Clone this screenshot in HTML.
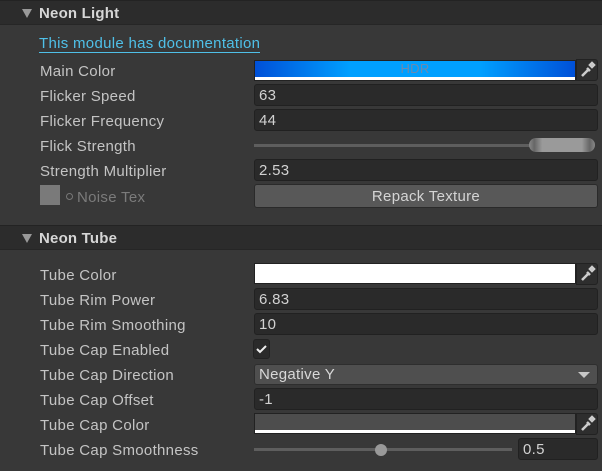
<!DOCTYPE html>
<html><head><style>
*{margin:0;padding:0;box-sizing:border-box}
body{width:602px;height:471px;background:#383838;font-family:"Liberation Sans",sans-serif;font-size:15px;letter-spacing:0.3px;color:#c4c4c4;position:relative;overflow:hidden}
.a{position:absolute}
.hdr{position:absolute;left:0;width:602px;height:25px;background:#2c2c2c;border-top:1px solid #232323;border-bottom:1px solid #262626}
.hdr span{position:absolute;left:39px;top:4px;font-weight:bold;color:#d6d6d6;font-size:15px;letter-spacing:0.2px}
.tri{position:absolute;left:22px;top:8px;width:0;height:0;border-left:5px solid transparent;border-right:5px solid transparent;border-top:9px solid #999}
.lbl{position:absolute;left:40px}
.fld{position:absolute;left:254px;width:344px;height:22px;background:#2a2a2a;border:1px solid #212121;border-radius:3px;padding-left:4px;line-height:22px;color:#d2d2d2}
.pick{position:absolute;left:576px;width:22px;height:22px;background:#2e2e2e;border:1px solid #222;border-radius:0 3px 3px 0}
</style></head><body>
<div class="hdr" style="top:0"><div class="tri"></div><span>Neon Light</span></div>
<div class="a" style="left:39px;top:35px;color:#4fc0e8;border-bottom:1px solid #4fc0e8;line-height:17px">This module has documentation</div>

<div class="lbl" style="top:63px">Main Color</div>
<div class="a" style="left:254px;top:60px;width:322px;height:21px;background:#fff;border:1px solid #222">
<div style="height:16px;background:linear-gradient(90deg,#0050d8,#00a0ff 30%,#00a0ff 70%,#0050d8);text-align:center;color:#6a8ab0;font-size:13px;line-height:16px">HDR</div></div>
<div class="pick" style="top:59px"><svg width="20" height="20" viewBox="0 0 20 20"><path d="M5 16 L12 9 M13 5 l2 -2 l2 2 l-2 2 z M10 8 l3 3" stroke="#ccc" stroke-width="2.5" fill="none"/></svg></div>

<div class="lbl" style="top:88px">Flicker Speed</div><div class="fld" style="top:84px">63</div>
<div class="lbl" style="top:113px">Flicker Frequency</div><div class="fld" style="top:109px">44</div>
<div class="lbl" style="top:138px">Flick Strength</div>
<div class="a" style="left:254px;top:144px;width:280px;height:3px;background:#5e5e5e"></div>
<div class="a" style="left:529px;top:138px;width:66px;height:14px;background:linear-gradient(90deg,#888,#666 8%,#9a9a9a 20%,#9a9a9a 80%,#666 92%,#888);border-radius:7px"></div>
<div class="lbl" style="top:163px">Strength Multiplier</div><div class="fld" style="top:159px">2.53</div>
<div class="a" style="left:40px;top:185px;width:20px;height:20px;background:#7a7a7a"></div>
<div class="a" style="left:66px;top:193px;width:7px;height:7px;border:1.5px solid #777;border-radius:50%"></div>
<div class="a" style="left:77px;top:189px;color:#7b7b7b">Noise Tex</div>
<div class="a" style="left:254px;top:184px;width:344px;height:24px;background:#585858;border:1px solid #2a2a2a;border-radius:3px;text-align:center;line-height:23px;color:#d4d4d4">Repack Texture</div>

<div class="hdr" style="top:225px"><div class="tri"></div><span>Neon Tube</span></div>

<div class="lbl" style="top:267px">Tube Color</div>
<div class="a" style="left:254px;top:263px;width:322px;height:21px;background:#fff;border:1px solid #222"></div>
<div class="pick" style="top:263px"><svg width="20" height="20" viewBox="0 0 20 20"><path d="M5 16 L12 9 M13 5 l2 -2 l2 2 l-2 2 z M10 8 l3 3" stroke="#ccc" stroke-width="2.5" fill="none"/></svg></div>
<div class="lbl" style="top:292px">Tube Rim Power</div><div class="fld" style="top:288px">6.83</div>
<div class="lbl" style="top:317px">Tube Rim Smoothing</div><div class="fld" style="top:313px">10</div>
<div class="lbl" style="top:342px">Tube Cap Enabled</div>
<div class="a" style="left:253px;top:339px;width:17px;height:20px;background:#2a2a2a;border:1px solid #222;border-radius:3px"><svg width="15" height="18" viewBox="0 0 15 18"><path d="M3 9 l3 3 l6 -6" stroke="#eee" stroke-width="2" fill="none"/></svg></div>
<div class="lbl" style="top:367px">Tube Cap Direction</div>
<div class="a" style="left:254px;top:364px;width:344px;height:21px;background:#4f4f4f;border:1px solid #2e2e2e;border-radius:3px;padding-left:4px;line-height:20px;color:#d8d8d8">Negative Y</div>
<div class="a" style="left:578px;top:372px;border-left:6px solid transparent;border-right:6px solid transparent;border-top:6px solid #c8c8c8"></div>
<div class="lbl" style="top:392px">Tube Cap Offset</div><div class="fld" style="top:388px">-1</div>
<div class="lbl" style="top:417px">Tube Cap Color</div>
<div class="a" style="left:254px;top:413px;width:322px;height:21px;background:#fff;border:1px solid #222"><div style="height:16px;background:#4d4d4d"></div></div>
<div class="pick" style="top:413px"><svg width="20" height="20" viewBox="0 0 20 20"><path d="M5 16 L12 9 M13 5 l2 -2 l2 2 l-2 2 z M10 8 l3 3" stroke="#ccc" stroke-width="2.5" fill="none"/></svg></div>
<div class="lbl" style="top:442px">Tube Cap Smoothness</div>
<div class="a" style="left:254px;top:448px;width:258px;height:3px;background:#5e5e5e"></div>
<div class="a" style="left:375px;top:444px;width:12px;height:12px;border-radius:50%;background:#999"></div>
<div class="a" style="left:518px;top:438px;width:80px;height:22px;background:#2a2a2a;border:1px solid #212121;border-radius:3px;padding-left:4px;line-height:22px;color:#d2d2d2">0.5</div>
</body></html>
